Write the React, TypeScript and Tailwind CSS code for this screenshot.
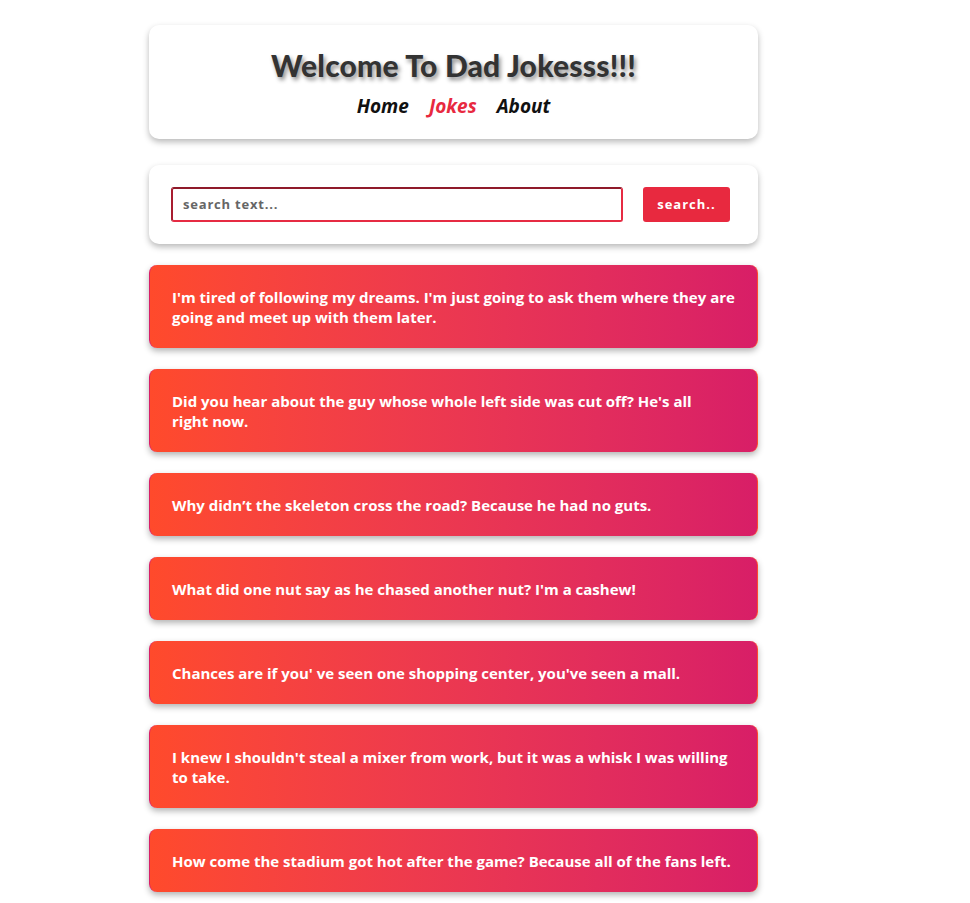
import React from "react";

const jokes: { text: string; pr: string }[] = [
  { text: "I'm tired of following my dreams. I'm just going to ask them where they are going and meet up with them later.", pr: "pr-[16px]" },
  { text: "Did you hear about the guy whose whole left side was cut off? He's all right now.", pr: "pr-[26px]" },
  { text: "Why didn’t the skeleton cross the road? Because he had no guts.", pr: "pr-[16px]" },
  { text: "What did one nut say as he chased another nut? I'm a cashew!", pr: "pr-[16px]" },
  { text: "Chances are if you' ve seen one shopping center, you've seen a mall.", pr: "pr-[16px]" },
  { text: "I knew I shouldn't steal a mixer from work, but it was a whisk I was willing to take.", pr: "pr-[16px]" },
  { text: "How come the stadium got hot after the game? Because all of the fans left.", pr: "pr-[16px]" },
];

export default function App() {
  return (
    <div className="min-h-[903px] bg-white" style={{ fontFamily: "'Open Sans', Lato, sans-serif" }}>
      <div className="ml-[149px] w-[609px] pt-[25px] flex flex-col">
        <div className="rounded-[10px] bg-white shadow-[0_3px_6px_rgba(0,0,0,0.28)] h-[114px] flex flex-col items-center pt-[20px]">
          <h1
            className="text-[30px] leading-[40px] font-black text-[#333] [text-shadow:2px_3px_4px_rgba(0,0,0,0.45)] tracking-[0.2px]"
            style={{ fontFamily: "Lato, sans-serif" }}
          >
            Welcome To Dad Jokesss!!!
          </h1>
          <nav className="flex gap-[20px] mt-[7px] text-[19px] leading-[28px] font-bold italic">
            <a className="text-[#111]">Home</a>
            <a className="text-[#e8293f]">Jokes</a>
            <a className="text-[#111]">About</a>
          </nav>
        </div>

        <div className="mt-[26px] rounded-[10px] bg-white shadow-[0_3px_6px_rgba(0,0,0,0.28)] h-[79px] flex items-start pt-[22px] pl-[22px] pr-[28px] gap-[20px]">
          <div className="flex-1 h-[35px] rounded-[3px] border-2 border-t-[#8f1a2a] border-l-[#a81d30] border-r-[#e62b43] border-b-[#e62b43] flex items-center px-[10px]">
            <span className="text-[13px] font-bold tracking-[0.8px] text-[#666]">search text...</span>
          </div>
          <button className="w-[87px] h-[35px] rounded-[3px] bg-[#e8293f] text-white text-[13px] font-bold tracking-[1px]">
            search..
          </button>
        </div>

        <div className="mt-[21px] flex flex-col gap-[21px]">
          {jokes.map((j, i) => (
            <div
              key={i}
              className={
                "rounded-[8px] bg-gradient-to-r from-[#ff4a2b] to-[#d81e67] border-l border-r border-l-[#d81e67] border-r-[#ff4a2b] shadow-[0_3px_6px_rgba(0,0,0,0.3)] pl-[22px] py-[21.5px] text-white text-[15px] leading-[20px] font-bold " +
                j.pr
              }
            >
              {j.text}
            </div>
          ))}
        </div>
      </div>
    </div>
  );
}
